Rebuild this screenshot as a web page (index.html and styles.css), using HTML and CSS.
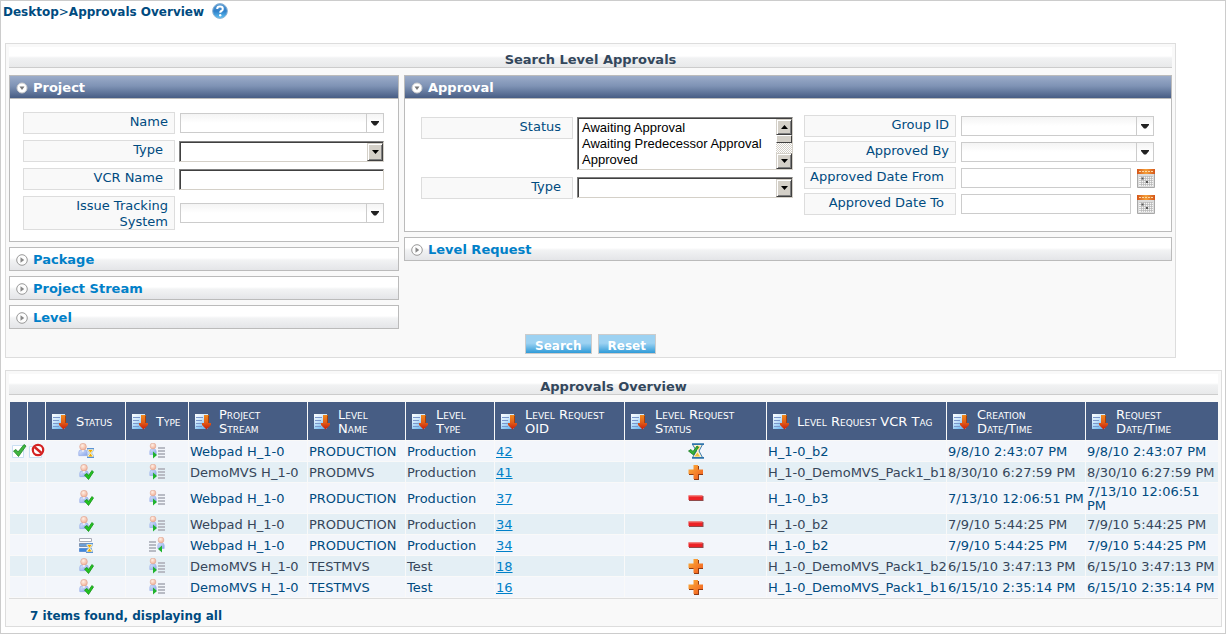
FILE: index.html
```html
<!DOCTYPE html>
<html lang="en">
<head>
<meta charset="utf-8">
<title>Approvals Overview</title>
<link rel="stylesheet" href="styles.css">
</head>
<body>
<svg class="defs" aria-hidden="true">
  <defs>
    <linearGradient id="g-doc" x1="0" y1="0" x2="0.6" y2="1"><stop offset="0" stop-color="#fff"/><stop offset="0.45" stop-color="#cfe8fb"/><stop offset="1" stop-color="#6db9f2"/></linearGradient>
    <linearGradient id="g-arrow" x1="0" y1="0" x2="0" y2="1"><stop offset="0" stop-color="#f08a1c"/><stop offset="0.5" stop-color="#e2601a"/><stop offset="1" stop-color="#c81c08"/></linearGradient>
    <linearGradient id="g-plus" x1="0" y1="0" x2="1" y2="1"><stop offset="0" stop-color="#fbb03a"/><stop offset="1" stop-color="#f15a1e"/></linearGradient>
    <linearGradient id="g-body" x1="0" y1="0" x2="1" y2="1"><stop offset="0" stop-color="#dfe8fb"/><stop offset="1" stop-color="#86a4ea"/></linearGradient>
    <radialGradient id="g-head" cx="0.4" cy="0.35" r="0.7"><stop offset="0" stop-color="#fff0e6"/><stop offset="1" stop-color="#f0aa90"/></radialGradient>
    <linearGradient id="g-help" x1="0" y1="0" x2="0" y2="1"><stop offset="0" stop-color="#5c9fd6"/><stop offset="0.5" stop-color="#2f7fc8"/><stop offset="1" stop-color="#5fc3f5"/></linearGradient>
    <linearGradient id="g-cal" x1="0" y1="0" x2="1" y2="0"><stop offset="0" stop-color="#d4551a"/><stop offset="0.5" stop-color="#f5a03a"/><stop offset="1" stop-color="#d4551a"/></linearGradient>
  </defs>
  <symbol id="i-sort" viewBox="0 0 16 16">
    <path d="M0 0h13v15H0z" fill="url(#g-doc)"/>
    <path d="M1 3.500h7M1 6.500h6M1 9.500h6M1 12.500h6" stroke="#7b97cc"/>
    <path d="M9 1h5v8h2v2l-4.500 4.500L7 11V9h2z" fill="url(#g-arrow)"/>
    <path d="M13.500 1.500v7.500" stroke="#a8400c"/>
  </symbol>
  <symbol id="i-approve" viewBox="0 0 16 16">
    <path d="M1.500 2.500h11v12h-11z" fill="#fff" stroke="#c9dff3"/>
    <path d="M2.500 8l2.500-1.500 2 2.500 6-7.500 2 1.500L7.500 13.500z" fill="#3fb53f" stroke="#1c8526" stroke-width=".8"/>
  </symbol>
  <symbol id="i-reject" viewBox="0 0 16 16">
    <path d="M.5 3.500h12v11H.5z" fill="#fff" stroke="#c9dff3"/>
    <circle cx="9" cy="7" r="5.200" fill="#fff" stroke="#d42323" stroke-width="2.200"/>
    <path d="M5.500 4l7 6" stroke="#d42323" stroke-width="2.400"/>
  </symbol>
  <symbol id="i-person" viewBox="0 0 10 15">
    <path d="M.5 13.500V10Q.5 7.500 3 7.500h4q2.500 0 2.500 2.500v3.500z" fill="url(#g-body)" stroke="#93abe8" stroke-width=".8"/>
    <path d="M3.500 7.500L5 10l1.500-2.500z" fill="#fff"/>
    <circle cx="5" cy="4" r="3.600" fill="url(#g-head)" stroke="#d9a493" stroke-width=".6"/>
  </symbol>
  <symbol id="i-glass" viewBox="0 0 7 10">
    <path d="M.5 1h6v1.500L4.500 5l2 2.500V9h-6V7.500L2.500 5l-2-2.500z" fill="#fff3c0" stroke="#8fb6e0" stroke-width=".8"/>
    <path d="M1.500 2h4L3.500 4.800zM3.500 5.600L5.500 8.500h-4z" fill="#f2a900"/>
    <path d="M0 .5h7M0 9.500h7" stroke="#5a93d6"/>
  </symbol>
  <symbol id="i-waiting" viewBox="0 0 16 16">
    <use href="#i-person" x="0" y="0" width="10" height="14"/>
    <use href="#i-glass" x="9" y="5" width="7" height="10"/>
  </symbol>
  <symbol id="i-approved" viewBox="0 0 16 16">
    <use href="#i-person" x="1" y="0" width="10" height="14"/>
    <path d="M6.500 11l2.500-1.500 1.500 2L14 6.500 15.500 8l-5 7.500z" fill="#22c322" stroke="#159215" stroke-width=".8"/>
  </symbol>
  <symbol id="i-manual" viewBox="0 0 16 16">
    <path d="M.8 11.500V8.500Q.8 6 3 6h2q2.200 0 2.200 2.500v3z" fill="url(#g-body)" stroke="#93abe8" stroke-width=".6"/>
    <circle cx="4" cy="3" r="2.900" fill="url(#g-head)" stroke="#d9a493" stroke-width=".5"/>
    <path d="M4 8.500l4 3.500-4 3.500z" fill="#1fb32c"/>
    <path d="M9 5h7M9 8h7M9 11h7M9 14h7" stroke="#b8bbc4" stroke-width="2"/>
  </symbol>
  <symbol id="i-automatic" viewBox="0 0 16 16">
    <path d="M8.800 11.500V8.500Q8.800 6 11 6h2q2.200 0 2.200 2.500v3z" fill="url(#g-body)" stroke="#93abe8" stroke-width=".6"/>
    <circle cx="12" cy="3" r="2.900" fill="url(#g-head)" stroke="#d9a493" stroke-width=".5"/>
    <path d="M13 8.500L9 12l4 3.500z" fill="#1fb32c"/>
    <path d="M0 5h7M0 8h7M0 11h7M0 14h7" stroke="#b8bbc4" stroke-width="2"/>
  </symbol>
  <symbol id="i-queued" viewBox="0 0 16 16">
    <path d="M1.500 1.500h12v3h-12z" fill="#fff" stroke="#a9adb8"/>
    <path d="M1.500 6.500h12v3h-12z" fill="#6d9fd6" stroke="#7f93b0"/>
    <path d="M1.500 11.500h12v3h-12z" fill="#3f87dc" stroke="#5f92d6"/>
    <use href="#i-glass" x="8" y="6" width="7" height="10"/>
  </symbol>
  <symbol id="i-progress" viewBox="0 0 16 16">
    <path d="M4.500 1.500h10l-3.500 6.500 3.500 6.500h-10L8.500 8z" fill="#fdf3cc" stroke="#3a7ab0"/>
    <path d="M9.500 9.500l2.500 4H6.500zM10 7l2-3.500H8z" fill="#f2c23a"/>
    <path d="M4 1.200h12M4 14.800h12" stroke="#2f74ab" stroke-width="1.800"/>
    <path d="M.5 8l2.500-1.500 2 2L9 3l1.500 1L5.500 12z" fill="#36b336" stroke="#187a22" stroke-width=".8"/>
  </symbol>
  <symbol id="i-plus" viewBox="0 0 16 16">
    <path d="M6 2h5v4h4v5h-4v5H6v-5H1V6h5z" fill="#8f3a14"/>
    <path d="M5.500 1h4.500v4.500h5V10h-5v5H5.500v-5H.5V5.500h5z" fill="url(#g-plus)"/>
  </symbol>
  <symbol id="i-minus" viewBox="0 0 16 16">
    <path d="M1 6h14.500v5H1z" fill="#8f4a4a"/>
    <path d="M.5 5.500h14v4.500H.5z" fill="#ec2226"/>
    <path d="M.5 6h14" stroke="#f27c74"/>
  </symbol>
  <symbol id="i-calendar" viewBox="0 0 18 19">
    <path d="M.5 4.500h17v14H.5z" fill="#dcdcdc" stroke="#a8a8a8"/>
    <path d="M0 0h18v5H0z" fill="url(#g-cal)"/>
    <path d="M2 2.500h11M14 2.500h2" stroke="#fbd9a8" stroke-dasharray="2 1"/>
    <path d="M2 7h14v10H2z" fill="#f6f6f6"/>
    <path d="M2 7.500h14M2 9.500h14M2 11.500h14M2 13.500h14M2 15.500h14M4.500 7v10M6.500 7v10M8.500 7v10M10.500 7v10M12.500 7v10M14.500 7v10" stroke="#b4b4b4" stroke-width=".7"/>
    <path d="M4.500 8.500h2v2h-2zM9 12h2v2H9z" fill="#555"/>
  </symbol>
  <symbol id="i-open" viewBox="0 0 12 12">
    <circle cx="6" cy="6" r="5" fill="#fff" stroke="#ccc"/>
    <path d="M3.500 4.500h5L6 8z" fill="#777"/>
  </symbol>
  <symbol id="i-closed" viewBox="0 0 12 12">
    <circle cx="6" cy="6" r="5.300" fill="#fdfdfd" stroke="#999"/>
    <path d="M4.500 3.200L8.200 6 4.500 8.800z" fill="#888"/>
  </symbol>
  <symbol id="i-help" viewBox="0 0 16 16">
    <circle cx="8" cy="8" r="7.400" fill="url(#g-help)" stroke="#8fb3d4"/>
    <path d="M5.200 6Q5.200 3.600 8 3.600t2.800 2.300q0 1.300-1.500 2.100Q8.200 8.600 8.200 9.800" fill="none" stroke="#fff" stroke-width="2"/>
    <circle cx="8.200" cy="12.200" r="1.200" fill="#fff"/>
  </symbol>
  <symbol id="i-down" viewBox="0 0 8 5"><path d="M0 0h8v1L5 4.500H3L0 1z"/></symbol>
  <symbol id="i-down-small" viewBox="0 0 7 4"><path d="M0 0h7L3.500 4z"/></symbol>
  <symbol id="i-up-small" viewBox="0 0 7 4"><path d="M0 4h7L3.500 0z"/></symbol>
</svg>

<div class="page">
  <header class="topbar">
    <nav class="crumbs"><a href="#">Desktop</a><span class="sep">&gt;</span><a href="#">Approvals Overview</a></nav>
    <a class="help" href="#" aria-label="Help"><svg class="icon"><use href="#i-help"/></svg></a>
  </header>

  <form class="panel search">
    <h2 class="title">Search Level Approvals</h2>
    <div class="groups">
      <div class="stack">
        <section class="group">
          <button type="button" class="group-head open"><svg class="toggle"><use href="#i-open"/></svg>Project</button>
          <div class="group-body project">
            <label for="p-name">Name</label>
            <div class="combo"><input id="p-name" type="text"><button type="button" aria-label="Show names"><svg><use href="#i-down"/></svg></button></div>
            <label class="wide" for="p-type">Type</label>
            <div class="drop"><select id="p-type"><option></option></select><span class="knob"><svg><use href="#i-down-small"/></svg></span></div>
            <label class="wide" for="p-vcr">VCR Name</label>
            <input class="sunken" id="p-vcr" type="text">
            <label for="p-issue">Issue Tracking System</label>
            <div class="combo"><input id="p-issue" type="text"><button type="button" aria-label="Show systems"><svg><use href="#i-down"/></svg></button></div>
          </div>
        </section>
        <button type="button" class="group-head"><svg class="toggle"><use href="#i-closed"/></svg>Package</button>
        <button type="button" class="group-head"><svg class="toggle"><use href="#i-closed"/></svg>Project Stream</button>
        <button type="button" class="group-head"><svg class="toggle"><use href="#i-closed"/></svg>Level</button>
      </div>
      <div class="stack">
        <section class="group">
          <button type="button" class="group-head open"><svg class="toggle"><use href="#i-open"/></svg>Approval</button>
          <div class="group-body approval">
            <div class="fields left">
              <label class="wide" for="a-status">Status</label>
              <div class="listbox">
                <select id="a-status" size="3" multiple><option>Awaiting Approval</option><option>Awaiting Predecessor Approval</option><option>Approved</option></select>
                <div class="scrollbar" aria-hidden="true"><span class="knob"><svg><use href="#i-up-small"/></svg></span><span class="thumb"></span><span class="track"></span><span class="knob"><svg><use href="#i-down-small"/></svg></span></div>
              </div>
              <label class="wide" for="a-type">Type</label>
              <div class="drop"><select id="a-type"><option></option></select><span class="knob"><svg><use href="#i-down-small"/></svg></span></div>
            </div>
            <div class="fields right">
              <label for="a-group">Group ID</label>
              <div class="combo"><input id="a-group" type="text"><button type="button" aria-label="Show groups"><svg><use href="#i-down"/></svg></button></div>
              <label for="a-by">Approved By</label>
              <div class="combo"><input id="a-by" type="text"><button type="button" aria-label="Show approvers"><svg><use href="#i-down"/></svg></button></div>
              <label class="wide" for="a-from">Approved Date From</label>
              <div class="date"><input id="a-from" type="text"><button type="button" aria-label="Pick start date"><svg><use href="#i-calendar"/></svg></button></div>
              <label class="wide" for="a-to">Approved Date To</label>
              <div class="date"><input id="a-to" type="text"><button type="button" aria-label="Pick end date"><svg><use href="#i-calendar"/></svg></button></div>
            </div>
          </div>
        </section>
        <button type="button" class="group-head"><svg class="toggle"><use href="#i-closed"/></svg>Level Request</button>
      </div>
    </div>
    <div class="actions"><button type="submit">Search</button><button type="reset">Reset</button></div>
  </form>

  <section class="panel results">
    <h2 class="title">Approvals Overview</h2>
    <table>
      <colgroup><col class="c-act"><col class="c-act"><col class="c-status"><col class="c-type"><col class="c-stream"><col class="c-level"><col class="c-ltype"><col class="c-oid"><col class="c-rstatus"><col class="c-tag"><col class="c-created"><col class="c-requested"></colgroup>
      <thead>
        <tr>
          <th></th><th></th>
          <th><div class="th"><svg class="icon"><use href="#i-sort"/></svg><span>Status</span></div></th>
          <th><div class="th"><svg class="icon"><use href="#i-sort"/></svg><span>Type</span></div></th>
          <th><div class="th"><svg class="icon"><use href="#i-sort"/></svg><span>Project<br>Stream</span></div></th>
          <th><div class="th"><svg class="icon"><use href="#i-sort"/></svg><span>Level<br>Name</span></div></th>
          <th><div class="th"><svg class="icon"><use href="#i-sort"/></svg><span>Level<br>Type</span></div></th>
          <th><div class="th"><svg class="icon"><use href="#i-sort"/></svg><span>Level Request<br>OID</span></div></th>
          <th><div class="th"><svg class="icon"><use href="#i-sort"/></svg><span>Level Request<br>Status</span></div></th>
          <th><div class="th"><svg class="icon"><use href="#i-sort"/></svg><span>Level Request VCR Tag</span></div></th>
          <th><div class="th"><svg class="icon"><use href="#i-sort"/></svg><span>Creation<br>Date/Time</span></div></th>
          <th><div class="th"><svg class="icon"><use href="#i-sort"/></svg><span>Request<br>Date/Time</span></div></th>
        </tr>
      </thead>
      <tbody>
        <tr><td class="pic"><svg class="icon"><use href="#i-approve"/></svg></td><td class="pic"><svg class="icon"><use href="#i-reject"/></svg></td><td class="pic"><svg class="icon"><use href="#i-waiting"/></svg></td><td class="pic"><svg class="icon"><use href="#i-manual"/></svg></td><td>Webpad H_1-0</td><td>PRODUCTION</td><td>Production</td><td><a href="#">42</a></td><td class="pic"><svg class="icon"><use href="#i-progress"/></svg></td><td class="tag">H_1-0_b2</td><td>9/8/10 2:43:07 PM</td><td>9/8/10 2:43:07 PM</td></tr>
        <tr><td></td><td></td><td class="pic"><svg class="icon"><use href="#i-approved"/></svg></td><td class="pic"><svg class="icon"><use href="#i-manual"/></svg></td><td>DemoMVS H_1-0</td><td>PRODMVS</td><td>Production</td><td><a href="#">41</a></td><td class="pic"><svg class="icon"><use href="#i-plus"/></svg></td><td class="tag">H_1-0_DemoMVS_Pack1_b1</td><td>8/30/10 6:27:59 PM</td><td>8/30/10 6:27:59 PM</td></tr>
        <tr><td></td><td></td><td class="pic"><svg class="icon"><use href="#i-approved"/></svg></td><td class="pic"><svg class="icon"><use href="#i-manual"/></svg></td><td>Webpad H_1-0</td><td>PRODUCTION</td><td>Production</td><td><a href="#">37</a></td><td class="pic"><svg class="icon"><use href="#i-minus"/></svg></td><td class="tag">H_1-0_b3</td><td>7/13/10 12:06:51 PM</td><td>7/13/10 12:06:51 PM</td></tr>
        <tr><td></td><td></td><td class="pic"><svg class="icon"><use href="#i-approved"/></svg></td><td class="pic"><svg class="icon"><use href="#i-manual"/></svg></td><td>Webpad H_1-0</td><td>PRODUCTION</td><td>Production</td><td><a href="#">34</a></td><td class="pic"><svg class="icon"><use href="#i-minus"/></svg></td><td class="tag">H_1-0_b2</td><td>7/9/10 5:44:25 PM</td><td>7/9/10 5:44:25 PM</td></tr>
        <tr><td></td><td></td><td class="pic"><svg class="icon"><use href="#i-queued"/></svg></td><td class="pic"><svg class="icon"><use href="#i-automatic"/></svg></td><td>Webpad H_1-0</td><td>PRODUCTION</td><td>Production</td><td><a href="#">34</a></td><td class="pic"><svg class="icon"><use href="#i-minus"/></svg></td><td class="tag">H_1-0_b2</td><td>7/9/10 5:44:25 PM</td><td>7/9/10 5:44:25 PM</td></tr>
        <tr><td></td><td></td><td class="pic"><svg class="icon"><use href="#i-approved"/></svg></td><td class="pic"><svg class="icon"><use href="#i-manual"/></svg></td><td>DemoMVS H_1-0</td><td>TESTMVS</td><td>Test</td><td><a href="#">18</a></td><td class="pic"><svg class="icon"><use href="#i-plus"/></svg></td><td class="tag">H_1-0_DemoMVS_Pack1_b2</td><td>6/15/10 3:47:13 PM</td><td>6/15/10 3:47:13 PM</td></tr>
        <tr><td></td><td></td><td class="pic"><svg class="icon"><use href="#i-approved"/></svg></td><td class="pic"><svg class="icon"><use href="#i-manual"/></svg></td><td>DemoMVS H_1-0</td><td>TESTMVS</td><td>Test</td><td><a href="#">16</a></td><td class="pic"><svg class="icon"><use href="#i-plus"/></svg></td><td class="tag">H_1-0_DemoMVS_Pack1_b1</td><td>6/15/10 2:35:14 PM</td><td>6/15/10 2:35:14 PM</td></tr>
      </tbody>
    </table>
    <p class="summary">7 items found, displaying all</p>
  </section>
</div>
</body>
</html>
```

FILE: styles.css
```css
* { box-sizing: border-box; }

body {
  margin: 0;
  background: #fff;
  color: #004b80;
  font: 13px/16px Verdana, "DejaVu Sans", sans-serif;
}

button, input, select { font: inherit; margin: 0; border-radius: 0; }
svg { display: block; }
.defs { position: absolute; width: 0; height: 0; }
.icon { width: 16px; height: 16px; flex: none; }

.page { border: 1px solid #ccc; padding: 0 3px 6px 4px; }

.topbar { display: flex; align-items: flex-start; gap: 8px; height: 42px; padding-top: 2px; margin-left: -2px; }
.crumbs { font-size: 12px; font-weight: bold; padding-top: 1px; }
.crumbs a { color: #004b80; text-decoration: none; }
.crumbs .sep { font-weight: normal; }

.panel { border: 1px solid #ddd; background: #f9f9f9; padding: 3px; }
.search { margin-right: 46px; margin-bottom: 12px; }
.title {
  margin: 0 0 7px;
  height: 21px;
  padding-top: 5px;
  border-bottom: 1px solid #ccc;
  background: linear-gradient(#fff 45%, #f1f2f3 55%, #e8e9ea);
  color: #33475c;
  font-size: 13px;
  line-height: 16px;
  text-align: center;
}

.groups { display: grid; grid-template-columns: 390fr 768fr; gap: 5px; align-items: start; }
.stack { display: flex; flex-direction: column; gap: 5px; }
.group { border: 1px solid #bbb; background: #fff; }
.group-head {
  display: flex;
  align-items: center;
  gap: 5px;
  width: 100%;
  height: 24px;
  padding: 1px 6px 0;
  border: 1px solid #bbb;
  background: linear-gradient(#fff 45%, #f2f3f4 55%, #e4e5e8);
  color: #0080c8;
  font-weight: bold;
  text-align: left;
}
.group-head.open {
  height: 23px;
  border-width: 0 0 1px;
  background: linear-gradient(#9bacc9, #7f93b5 45%, #475d84);
  color: #fff;
}
.toggle { width: 12px; height: 12px; }

label {
  height: 22px;
  padding: 1px 6px 0 4px;
  border: 1px solid #ddd;
  background: #f9f9f9;
  text-align: right;
}
label.wide { padding-right: 11px; padding-left: 0; }

.project {
  display: grid;
  grid-template-columns: 152px minmax(0, 1fr);
  gap: 6px 4px;
  align-items: center;
  padding: 13px 14px 11px 13px;
}
.project label:last-of-type { height: 34px; }

.approval {
  display: grid;
  grid-template-columns: minmax(0, 372fr) minmax(0, 352fr);
  gap: 11px;
  padding: 16px 15px 16px 16px;
}
.fields { display: grid; grid-template-columns: 152px minmax(0, 1fr); align-content: start; }
.left { gap: 7px 4px; padding-top: 2px; }
.right { gap: 4px; align-items: center; }

.combo { display: flex; height: 20px; margin-left: 1px; border: 1px solid #ccc; background: linear-gradient(#f4f4f4, #fff 50%); }
.right .combo { margin-right: 2px; }
.combo input { flex: 1; min-width: 0; border: 0; padding: 0 3px; background: none; }
.combo button { display: grid; place-items: center; width: 17px; padding: 0; border: 0; border-left: 1px solid #ccc; background: none; }
.combo svg { width: 8px; height: 5px; fill: #222; }

.sunken, .drop, .listbox {
  border: 1px solid;
  border-color: #808080 #d4d0c8 #d4d0c8 #808080;
  background: #fff;
  box-shadow: inset 1px 1px #404040;
}
.sunken { width: 100%; height: 21px; padding: 1px 4px; }
.drop { display: flex; height: 21px; padding: 1px 0 0 1px; }
.drop select { flex: 1; min-width: 0; appearance: none; border: 0; background: none; padding: 0 3px; }
.knob {
  display: grid;
  place-items: center;
  flex: none;
  width: 16px;
  height: 18px;
  border: 1px solid;
  border-color: #d4d0c8 #404040 #404040 #d4d0c8;
  background: #d4d0c8;
  box-shadow: inset 1px 1px #fff, inset -1px -1px #808080;
}
.knob svg { width: 7px; height: 4px; fill: #000; }

.listbox { display: flex; height: 53px; padding: 1px 0 0 1px; }
.listbox select {
  flex: 1;
  min-width: 0;
  height: 50px;
  padding: 1px 0;
  border: 0;
  overflow: hidden;
  background: none;
  color: #000;
  font: 13px/16px "Liberation Sans", Arial, sans-serif;
}
.listbox option { min-height: 16px; padding: 0 3px; line-height: 16px; }
.scrollbar { display: flex; flex-direction: column; width: 16px; }
.scrollbar .knob { height: 16px; }
.thumb { height: 8px; border: 1px solid; border-color: #fff #404040 #404040 #fff; background: #d4d0c8; }
.track { flex: 1; background: repeating-conic-gradient(#d4d0c8 0 25%, #fff 0 50%) 0 0 / 2px 2px; }

.date { display: flex; align-items: center; gap: 6px; margin: 0 1px; }
.date input { flex: 1; min-width: 0; height: 20px; padding: 0 3px; border: 1px solid #ccc; background: #fff; }
.date button { width: 18px; height: 19px; padding: 0; border: 0; background: none; }
.date svg { width: 18px; height: 19px; }

.actions { display: flex; justify-content: center; gap: 6px; margin-top: 5px; }
.actions button {
  height: 20px;
  padding: 3px 9px 0;
  border: 1px solid #ccc;
  background: linear-gradient(#9dd2f2 45%, #2f9bd8);
  color: #fff;
  font-size: 12px;
  font-weight: bold;
  line-height: 16px;
}

.results .title { margin-bottom: 6px; }
table { width: 100%; table-layout: fixed; border-collapse: separate; border-spacing: 1px; }
.c-act { width: 17px; }
.c-status { width: 79px; }
.c-type { width: 62px; }
.c-stream { width: 118px; }
.c-level { width: 97px; }
.c-ltype { width: 88px; }
.c-oid { width: 129px; }
.c-rstatus { width: 141px; }
.c-tag { width: 179px; }
.c-created { width: 138px; }
.c-requested { width: 132px; }

th { height: 38px; padding: 1px 0 0; background: #475d84; color: #fff; font-weight: normal; text-align: left; }
.th { display: flex; align-items: center; gap: 8px; padding-left: 6px; line-height: 14px; font-variant: small-caps; white-space: nowrap; }
td { height: 20px; padding: 2px 1px 0; background: #f3f6fb; line-height: 14px; }
tbody tr:nth-child(3) td { height: 30px; }
tbody tr:nth-child(even) td { background: #e4eff5; color: #36465a; }
td a { color: #0080c8; }
td.pic { padding: 0; }
.pic svg { margin: 0 auto; }
.tag { white-space: nowrap; }

.summary { margin: 0; padding: 9px 21px 0; height: 25px; border-top: 1px solid #ddd; font-size: 12px; font-weight: bold; }
```
